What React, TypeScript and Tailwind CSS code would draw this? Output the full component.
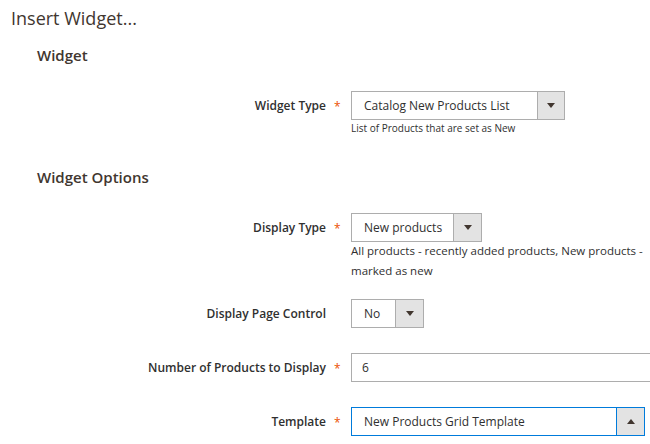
import React from 'react';

type Row = {
  label: string;
  required?: boolean;
  control: React.ReactNode;
  note?: React.ReactNode;
  mt: string;
};

function Arrow({ up = false }: { up?: boolean }) {
  return (
    <svg width="8" height="5" viewBox="0 0 8 5" className="block">
      {up ? <polygon points="0,5 8,5 4,0" fill="#41362f" /> : <polygon points="0,0 8,0 4,5" fill="#41362f" />}
    </svg>
  );
}

function Select({ value, width, btn = 'w-[27px]', focused = false, up = false }: { value: string; width: string; btn?: string; focused?: boolean; up?: boolean }) {
  return (
    <div className={`flex h-[29px] ${width} border bg-white ${focused ? 'border-[#007bdb]' : 'border-[#adadad]'}`}>
      <div className="flex-1 flex items-center pl-[12px] text-[12px] text-[#303030] whitespace-nowrap">{value}</div>
      <div className={`${btn} flex items-center justify-center bg-[#e3e3e3] border-l ${focused ? 'border-[#007bdb]' : 'border-[#adadad]'}`}>
        <Arrow up={up} />
      </div>
    </div>
  );
}

function Field({ row }: { row: Row }) {
  return (
    <div className={`grid grid-cols-[326px_25px_320px] ${row.mt}`}>
      <div className="h-[29px] flex items-center justify-end text-[12px] font-semibold text-[#303030] whitespace-nowrap">{row.label}</div>
      <div className="h-[29px] flex items-center pl-[8px] pt-[3px] text-[12px] text-[#eb5202]">{row.required ? '*' : ''}</div>
      <div>
        {row.control}
        {row.note}
      </div>
    </div>
  );
}

export default function App() {
  const widgetRows: Row[] = [
    {
      label: 'Widget Type',
      required: true,
      mt: 'mt-[25px]',
      control: <Select value="Catalog New Products List" width="w-[214px]" />,
      note: <p className="text-[10px] leading-[14px] text-[#303030] pt-[1px]">List of Products that are set as New</p>,
    },
  ];

  const optionRows: Row[] = [
    {
      label: 'Display Type',
      required: true,
      mt: 'mt-[25px]',
      control: <Select value="New products" width="w-[131px]" btn="w-[28px]" />,
      note: (
        <p className="-mt-[1px] text-[11.5px] leading-[20px] text-[#303030] whitespace-nowrap">
          All products - recently added products, New products -
          <br />
          marked as new
        </p>
      ),
    },
    {
      label: 'Display Page Control',
      mt: 'mt-[18px]',
      control: <Select value="No" width="w-[73px]" btn="w-[28px]" />,
    },
    {
      label: 'Number of Products to Display',
      required: true,
      mt: 'mt-[25px]',
      control: (
        <div className="h-[29px] w-[320px] border border-[#adadad] bg-white flex items-center pl-[10px] text-[12px] text-[#303030]">6</div>
      ),
    },
    {
      label: 'Template',
      required: true,
      mt: 'mt-[25px]',
      control: <Select value="New Products Grid Template" width="w-[294px]" btn="w-[28px]" focused up />,
    },
  ];

  return (
    <div className="w-[650px] h-[444px] overflow-hidden bg-white font-['Open_Sans',sans-serif]">
      <h1 className="pl-[11px] pt-[4px] text-[18px] leading-[28px] text-[#41362f]">Insert Widget...</h1>

      {/* Widget */}
      <h2 className="mt-[12px] pl-[37px] text-[15px] leading-[22px] font-semibold text-[#41362f]">Widget</h2>
      {widgetRows.map((r) => (
        <Field key={r.label} row={r} />
      ))}

      {/* Widget Options */}
      <h2 className="mt-[31px] pl-[37px] text-[15px] leading-[22px] font-semibold text-[#41362f]">Widget Options</h2>
      {optionRows.map((r) => (
        <Field key={r.label} row={r} />
      ))}
    </div>
  );
}
